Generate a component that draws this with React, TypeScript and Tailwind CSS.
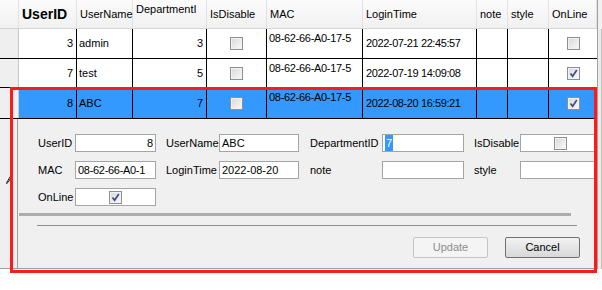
import React from 'react'

const font = { fontFamily: '"Liberation Sans", Tahoma, sans-serif' }

function Check({ checked }: { checked?: boolean }) {
  return (
    <span className="relative inline-block size-[13px] shrink-0 border border-[#8f8f8f] bg-linear-to-br from-[#d8d8d8] to-[#fafafa] shadow-[inset_0_0_0_1px_#f2f2f2]">
      {checked && (
        <svg viewBox="0 0 11 11" className="absolute inset-0 size-[11px]">
          <path d="M2.5 5.5 L4.6 8.3 L8.8 2" fill="none" stroke="#3a4d8c" strokeWidth="1.7" />
        </svg>
      )}
    </span>
  )
}

const head = [
  { t: 'UserID', w: 'w-[58px]' },
  { t: 'UserName', w: 'w-[56px]' },
  { t: 'DepartmentI', w: 'w-[74px]' },
  { t: 'IsDisable', w: 'w-[60px]' },
  { t: 'MAC', w: 'w-[96px]' },
  { t: 'LoginTime', w: 'w-[114px]' },
  { t: 'note', w: 'w-[31px]' },
  { t: 'style', w: 'w-[41px]' },
  { t: 'OnLine', w: 'w-[48px]' },
]

const rows = [
  { id: '3', name: 'admin', dep: '3', mac: '08-62-66-A0-17-5', time: '2022-07-21 22:45:57', on: false, h: 'h-[30px]' },
  { id: '7', name: 'test', dep: '5', mac: '08-62-66-A0-17-5', time: '2022-07-19 14:09:08', on: true, h: 'h-[29px]' },
  { id: '8', name: 'ABC', dep: '7', mac: '08-62-66-A0-17-5', time: '2022-08-20 16:59:21', on: true, h: 'h-[31px]', sel: true },
]

function Field({ children, className = '' }: { children?: React.ReactNode; className?: string }) {
  return (
    <div className={`flex h-[18px] shrink-0 items-center border border-[#a5a5a5] bg-white px-[2px] ${className}`}>
      {children}
    </div>
  )
}

function Label({ children, className = '' }: { children: React.ReactNode; className?: string }) {
  return <span className={`shrink-0 ${className}`}>{children}</span>
}

export default function App() {
  return (
    <div className="relative h-[290px] w-[602px] overflow-hidden bg-white text-[11px] text-black" style={font}>
      <div className="flex">
        <div className="w-[597px] shrink-0">
          {/* header */}
          <div className="flex h-[29px] border-b border-[#d5d5d5] bg-linear-to-b from-[#fbfbfb] to-[#f1f1f1]">
            <div className="w-[19px] shrink-0 border-r border-[#e2e2e2]" />
            {head.map((c, i) => (
              <div
                key={c.t}
                className={`${c.w} shrink-0 border-r border-[#e2e2e2] pl-[3px] ${
                  i === 2 ? 'pt-[1px]' : 'flex items-center'
                }`}
              >
                {i === 0 ? (
                  <span className="text-[14px] font-bold">{c.t}</span>
                ) : (
                  <span>{c.t}</span>
                )}
              </div>
            ))}
          </div>

          {/* rows */}
          {rows.map((r) => (
            <div key={r.id} className={`flex ${r.h} border-b border-black`}>
              <div className="w-[19px] shrink-0 border-r border-[#c8c8c8] bg-[#efefef]" />
              <div className={`flex ${r.sel ? 'bg-[#3399ff]' : 'bg-white'}`}>
                <div className="flex w-[58px] items-center justify-end border-r border-black pr-[3px]">{r.id}</div>
                <div className="flex w-[56px] items-center border-r border-black pl-[2px]">{r.name}</div>
                <div className="flex w-[74px] items-center justify-end border-r border-black pr-[3px]">{r.dep}</div>
                <div className="flex w-[60px] items-center justify-center border-r border-black">
                  <Check />
                </div>
                <div className="w-[96px] border-r border-black pl-[2px] pt-[1px] tracking-[-0.3px]">{r.mac}</div>
                <div className="flex w-[114px] items-center border-r border-black pl-[3px] tracking-[-0.4px]">{r.time}</div>
                <div className="w-[31px] border-r border-black" />
                <div className="w-[41px] border-r border-black" />
                <div className="flex w-[48px] items-center justify-center">
                  <Check checked={r.on} />
                </div>
              </div>
            </div>
          ))}

          {/* edit panel */}
          <div className="flex h-[150px] border-b border-[#a0a0a0]">
            <div className="relative w-[18px] shrink-0 border-r border-[#a0a0a0] bg-[#efefef]">
              <svg viewBox="0 0 8 10" className="absolute left-[5px] top-[55px] h-[10px] w-[8px]">
                <path d="M6.5 0.5 L2 8 L1.5 9.5 L3 8.5 L7.5 1.2" fill="none" stroke="#222" strokeWidth="1" />
              </svg>
            </div>
            <div className="min-w-0 flex-1 overflow-hidden bg-[#f0f0f0]">
              <div className="flex flex-col gap-[9px] pl-[20px] pt-[15px]">
                <div className="flex items-center">
                  <Label className="w-[37px]">UserID</Label>
                  <Field className="w-[81px] justify-end">8</Field>
                  <Label className="ml-[10px] w-[53px]">UserName</Label>
                  <Field className="w-[80px]">ABC</Field>
                  <Label className="ml-[11px] w-[72px]">DepartmentID</Label>
                  <Field className="w-[82px]">
                    <span className="bg-[#3399ff] px-[1px] text-white">7</span>
                  </Field>
                  <Label className="ml-[10px] w-[46px]">IsDisable</Label>
                  <Field className="w-[90px] justify-center pr-[12px]">
                    <Check />
                  </Field>
                </div>
                <div className="flex items-center">
                  <Label className="w-[37px]">MAC</Label>
                  <Field className="w-[81px] tracking-[-0.3px]">08-62-66-A0-1</Field>
                  <Label className="ml-[10px] w-[53px]">LoginTime</Label>
                  <Field className="w-[80px]">2022-08-20</Field>
                  <Label className="ml-[11px] w-[72px]">note</Label>
                  <Field className="w-[82px]" />
                  <Label className="ml-[10px] w-[46px]">style</Label>
                  <Field className="w-[90px]" />
                </div>
                <div className="flex items-center">
                  <Label className="w-[37px]">OnLine</Label>
                  <Field className="w-[81px] justify-center">
                    <Check checked />
                  </Field>
                </div>
              </div>

              <div className="ml-[1px] mt-[7px] h-[3px] w-[552px] bg-[#adadad]" />
              <div className="ml-[19px] mt-[9px] h-px w-[540px] bg-[#8e8e8e]" />

              <div className="mt-[11px] flex gap-[17px] pl-[395px]">
                <button className="h-[21px] w-[75px] shrink-0 rounded-[2px] border border-[#c4c4c4] bg-[#f4f4f4] text-[#8d8d8d]">
                  Update
                </button>
                <button className="h-[21px] w-[75px] shrink-0 rounded-[2px] border border-[#707070] bg-linear-to-b from-[#f2f2f2] to-[#d8d8d8] text-black">
                  Cancel
                </button>
              </div>
            </div>
          </div>
        </div>

        {/* right scrollbar edge */}
        <div className="flex w-[5px] shrink-0 flex-col border-l border-[#a0a0a0]">
          <div className="h-[29px] bg-[#f1f1f1]" />
          <div className="flex-1 border-r border-[#c0c0c0] bg-[#ececec]" />
        </div>
      </div>

      {/* red highlight annotation */}
      <div className="pointer-events-none absolute left-[10px] top-[87px] h-[186px] w-[587px] border-[3px] border-[#ff1a1a]" />
    </div>
  )
}
